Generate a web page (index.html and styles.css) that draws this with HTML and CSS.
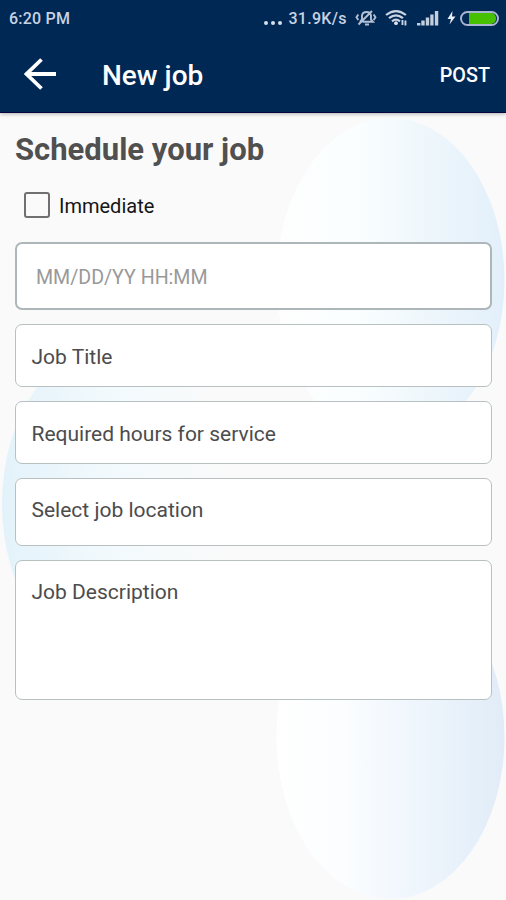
FILE: index.html
```html
<!DOCTYPE html>
<html lang="en">
<head>
<meta charset="utf-8">
<title>New job</title>
<link rel="stylesheet" href="styles.css">
</head>
<body>
<div class="screen">
  <svg class="backdrop" viewBox="0 0 506 900" aria-hidden="true">
    <defs>
      <linearGradient id="sky"><stop offset="0" stop-color="#fefefe"/><stop offset=".35" stop-color="#fafeff"/><stop offset=".6" stop-color="#f1f8fc"/><stop offset="1" stop-color="#e2effa"/></linearGradient>
      <linearGradient id="mist"><stop offset="0" stop-color="#e3f2fa"/><stop offset=".5" stop-color="#f3fafd"/><stop offset="1" stop-color="#fafafa"/></linearGradient>
      <linearGradient id="dusk"><stop offset="0" stop-color="#ffffff"/><stop offset=".3" stop-color="#fbfdfe"/><stop offset=".55" stop-color="#f1f7fd"/><stop offset="1" stop-color="#e1ecf8"/></linearGradient>
    </defs>
    <ellipse cx="390.500" cy="280" rx="114" ry="162" fill="url(#sky)"/>
    <ellipse cx="116" cy="504" rx="114" ry="162" fill="url(#mist)"/>
    <ellipse cx="390.500" cy="737" rx="114" ry="162" fill="url(#dusk)"/>
  </svg>
  <header class="header">
    <div class="status">
      <span class="clock">6:20 PM</span>
      <span class="dots"><i></i><i></i><i></i></span>
      <span class="speed">31.9K/s</span>
      <svg class="mute" width="22" height="18" viewBox="0 0 22 18" fill="none" stroke="#b4c1d5" stroke-width="1.900"><path d="M5 12.800L7 10.500V6.500Q7.500 3 11.500 3Q15.500 3 16 6.500V10.500L18 12.800H7.500M10 15.500h4M3.500 15.500L17 2M3.300 5.500L1.500 8.300l1.800 2.700M18.700 5.500L20.500 8.300 18.700 11"/></svg>
      <svg class="wifi" width="24" height="18" viewBox="0 0 24 18" fill="none" stroke="#c9d3e2" stroke-width="2.200"><path d="M1 6Q11 -2 21 6M4 9.200Q11 3.500 18 9.200M7 12.300Q11 9 15 12.300"/><circle cx="11" cy="14.200" r="1.900" fill="#d9e2ee" stroke="none"/><path d="M17.500 11v5M20.500 11.500v5" stroke-width="1.900"/></svg>
      <svg class="signal" width="22" height="16" viewBox="0 0 22 16" fill="#c3cedf"><path d="M0 13h3.400v2.500H0zM4.300 10.500h3.400v5H4.300zM8.800 7.500h3.400v8H8.800zM13.300 4.500h3.300v11h-3.300zM17.900 1h3.400v14.500h-3.400z"/></svg>
      <svg class="bolt" width="9" height="14" viewBox="0 0 9 14" fill="#e8eef5"><path d="M5.500 0L.5 8H4L2.500 13.500 8.500 5.500H5z"/></svg>
      <span class="battery"><i></i></span>
    </div>
    <div class="toolbar">
      <svg class="back" width="34" height="34" viewBox="0 0 34 34" fill="none" stroke="#fff" stroke-width="3.800"><path d="M18.500 2.500L3.500 17l15 14.500M2.500 17H33"/></svg>
      <h1 class="title">New job</h1>
      <span class="post">POST</span>
    </div>
  </header>
  <main class="form">
    <h2 class="heading">Schedule your job</h2>
    <div class="check"><span class="box"></span><span>Immediate</span></div>
    <div class="field date">MM/DD/YY HH:MM</div>
    <div class="field">Job Title</div>
    <div class="field">Required hours for service</div>
    <div class="field location">Select job location</div>
    <div class="field description">Job Description</div>
  </main>
</div>
</body>
</html>
```
FILE: styles.css
```css
* { box-sizing: border-box; }
body { margin: 0; background: #fafafa; font-family: Roboto, "Liberation Sans", sans-serif; }
.screen { position: relative; width: 506px; height: 900px; overflow: hidden; background: #fafafa; }
.backdrop { position: absolute; top: 0; left: 0; width: 506px; height: 900px; }
.header { position: relative; height: 113px; background: #002855; border-bottom: 1px solid #050542; box-shadow: 0 1px 4px rgba(0, 0, 0, .3); color: #fff; }
.status { height: 36px; display: flex; align-items: center; padding: 0 7px 0 9px; font-size: 16px; font-weight: 500; color: #c8d3e2; }
.clock { width: 256px; letter-spacing: .2px; }
.dots { display: flex; gap: 3px; width: 24px; padding-top: 9px; }
.dots i { width: 4px; height: 4px; border-radius: 50%; background: #d5deea; }
.speed { width: 67px; letter-spacing: .3px; }
.mute { margin-right: 8px; }
.wifi { margin-right: 8px; }
.signal { margin-right: 8px; }
.bolt { margin-right: 4px; }
.battery { width: 39px; height: 15px; padding: 0 1px 0 7px; border: 2px solid #a9b4d0; border-radius: 8px; }
.battery i { display: block; height: 100%; background: #46c000; border-radius: 0 5px 5px 0; }
.toolbar { height: 77px; display: flex; align-items: center; padding: 0 16px 0 23px; }
.back { margin-right: 45px; margin-top: -1px; }
.title { margin: 2px 0 0; flex: 1; font-size: 28px; line-height: 34px; font-weight: 500; }
.post { padding-top: 2px; font-size: 19.800px; font-weight: 500; }
.form { position: relative; display: flex; flex-direction: column; padding: 0 14px 0 15px; }
.heading { margin: 18px 0 0; font-size: 31px; line-height: 38px; font-weight: 700; color: #505050; }
.check { height: 26px; margin: 23px 0 24px 9px; display: flex; align-items: center; gap: 9px; font-size: 20px; line-height: 24px; color: #151515; }
.check span:last-child { padding-top: 2px; }
.box { width: 26px; height: 26px; border: 2.500px solid #707070; border-radius: 3px; }
.field { height: 63px; margin-bottom: 14px; padding: 2px 16px 0 15.500px; display: flex; align-items: center; border: 1.500px solid #b9c0c2; border-radius: 7px; background: #fff; font-size: 21px; color: #4c4c4c; }
.date { height: 68px; padding: 2px 19px 0; border: 2px solid #adb7b9; font-size: 19.600px; color: #999; }
.location { height: 68px; padding-top: 0; padding-bottom: 4px; }
.description { height: 140px; align-items: flex-start; padding-top: 19px; }
```
